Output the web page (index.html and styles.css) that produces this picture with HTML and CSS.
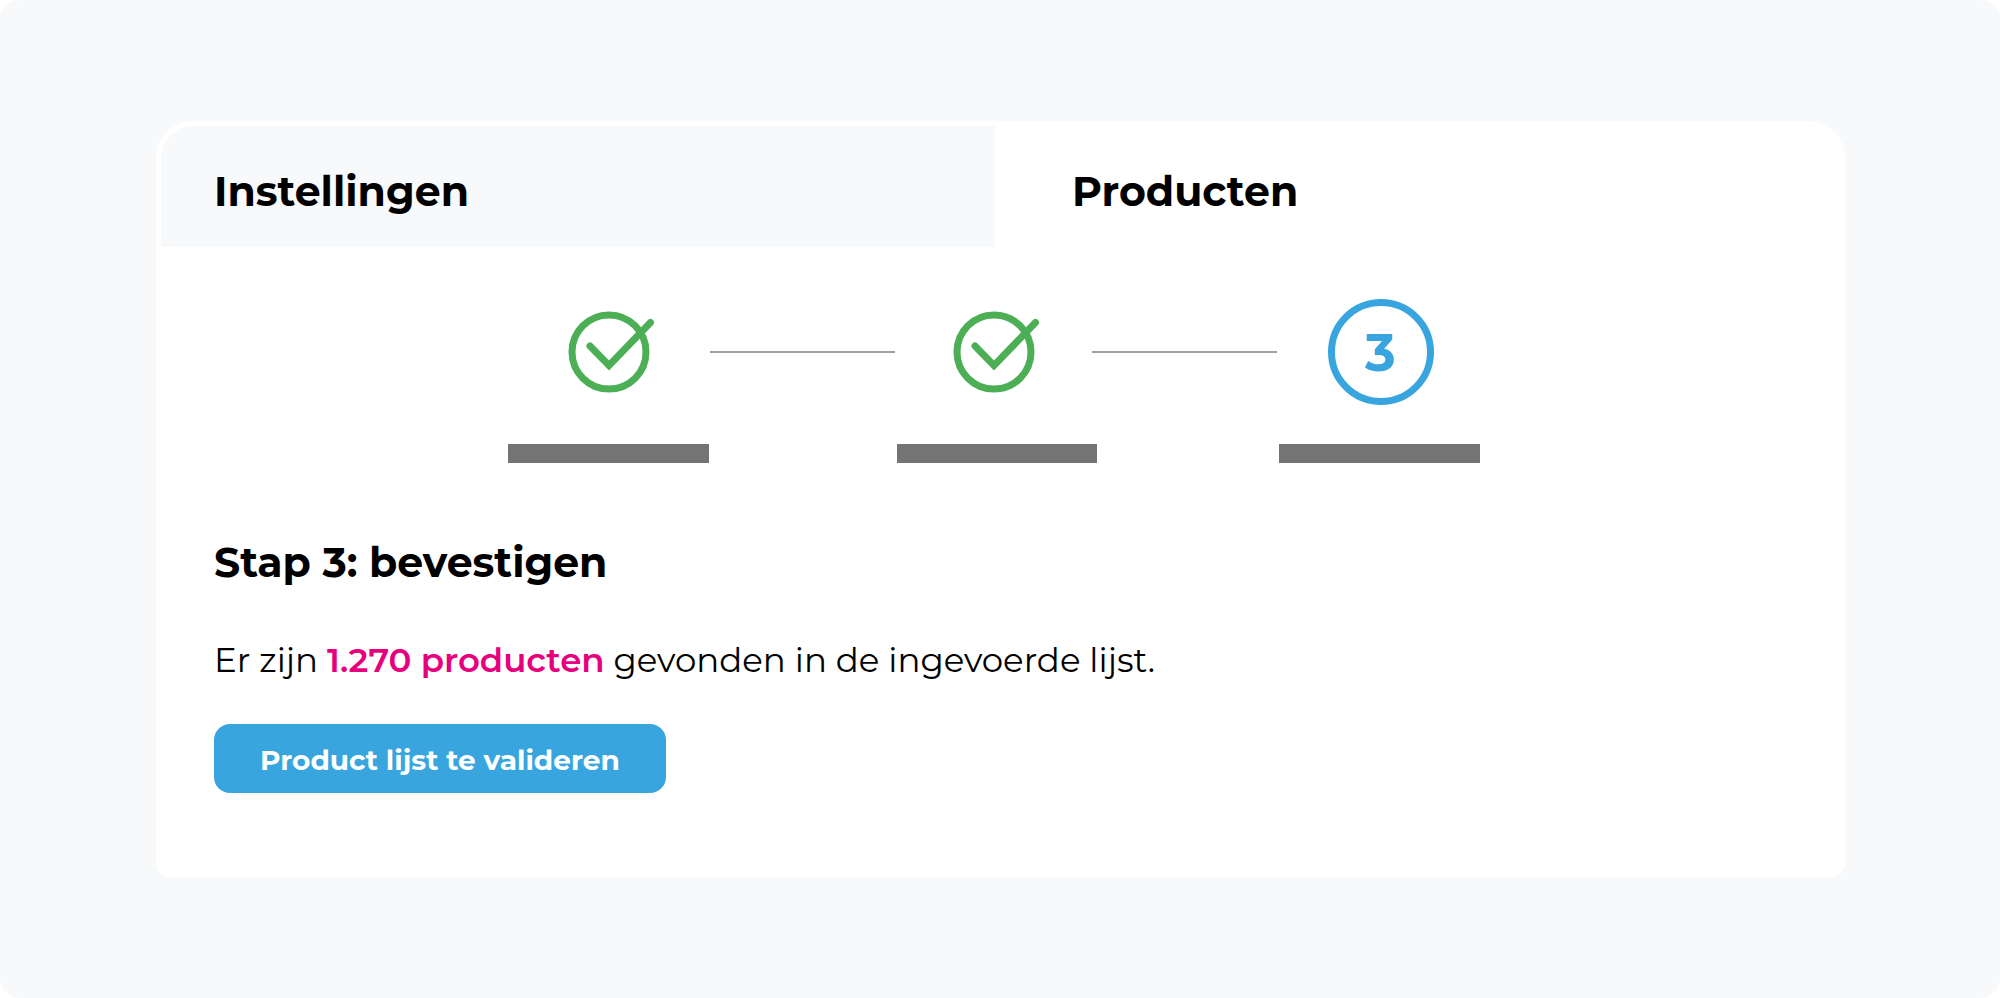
FILE: index.html
```html
<!DOCTYPE html>
<html lang="nl">
<head>
<meta charset="utf-8">
<meta name="viewport" content="width=device-width, initial-scale=1">
<title>Producten</title>
<link rel="stylesheet" href="styles.css">
</head>
<body>
<div class="page">
  <main class="card">
    <div class="tabs" role="tablist">
      <button class="tab" type="button" role="tab" aria-selected="false">Instellingen</button>
      <button class="tab tab-active" type="button" role="tab" aria-selected="true">Producten</button>
    </div>

    <div class="steps">
      <div class="markers">
        <svg class="marker" viewBox="0 0 106 106" role="img" aria-label="Stap 1 voltooid">
          <circle cx="53" cy="53" r="37"/>
          <path d="M34 47 53 66.500 94.500 23.500"/>
        </svg>
        <span class="connector"></span>
        <svg class="marker" viewBox="0 0 106 106" role="img" aria-label="Stap 2 voltooid">
          <circle cx="53" cy="53" r="37"/>
          <path d="M34 47 53 66.500 94.500 23.500"/>
        </svg>
        <span class="connector"></span>
        <span class="marker marker-current" aria-current="step">3</span>
      </div>
      <div class="labels">
        <span class="label-bar"></span>
        <span class="label-gap"></span>
        <span class="label-bar"></span>
        <span class="label-gap"></span>
        <span class="label-bar"></span>
      </div>
    </div>

    <section class="content">
      <h1 class="title">Stap 3: bevestigen</h1>
      <p class="summary">Er zijn <strong class="count">1.270 producten</strong> gevonden in de ingevoerde lijst.</p>
      <button class="submit" type="button">Product lijst te valideren</button>
    </section>
  </main>
</div>
</body>
</html>
```
FILE: styles.css
```css
* {
  box-sizing: border-box;
}

body {
  margin: 0;
  background: #fff;
  color: #000;
  font-family: Montserrat, Inter, sans-serif;
}

.page {
  min-height: 100vh;
  padding: 121px 155px 120px 156px;
  border-radius: 20px;
  background: #f8f9fb;
}

.card {
  padding: 5px 5px 85px;
  border-radius: 37px 37px 16px 16px;
  background: #fff;
}

.tabs {
  display: grid;
  grid-template-columns: 834fr 845fr;
}

.tab {
  height: 121px;
  padding: 8px 54px 0 53px;
  border: 0;
  border-radius: 32px 0 0 0;
  background: #f8f9fb;
  color: inherit;
  font: inherit;
  font-size: 41px;
  font-weight: 700;
  line-height: 52px;
  text-align: left;
}

.tab-active {
  padding-left: 77px;
  border-radius: 0 32px 0 0;
  background: #fff;
}

.steps {
  margin: 52px 356px 0 347px;
}

.markers {
  display: grid;
  grid-template-columns: 202fr 185fr 197fr 185fr 207fr;
  align-items: center;
  justify-items: center;
}

.marker {
  width: 106px;
  height: 106px;
  fill: none;
  stroke: #4caf55;
  stroke-width: 7;
  stroke-linecap: round;
}

.marker-current {
  display: flex;
  align-items: center;
  justify-content: center;
  border: 7px solid #38a5df;
  border-radius: 50%;
  color: #38a5df;
  font-size: 52px;
  font-weight: 700;
}

.connector {
  width: 100%;
  height: 2px;
  background: #a0a0a0;
}

.labels {
  display: grid;
  grid-template-columns: 201fr 188fr 201fr 182fr 201fr;
  margin-top: 39px;
  padding-right: 4px;
}

.label-bar {
  height: 19px;
  background: #747474;
}

.content {
  padding: 73px 53px 0;
}

.title {
  margin: 0;
  font-size: 41px;
  font-weight: 700;
  line-height: 52px;
}

.summary {
  margin: 48px 0 40px;
  font-size: 34px;
  line-height: 48px;
}

.count {
  color: #e6007e;
  font-weight: 600;
}

.submit {
  height: 69px;
  padding: 3px 46px 0;
  border: 0;
  border-radius: 16px;
  background: #38a5df;
  color: #fff;
  font: inherit;
  font-size: 28px;
  font-weight: 700;
}
```
